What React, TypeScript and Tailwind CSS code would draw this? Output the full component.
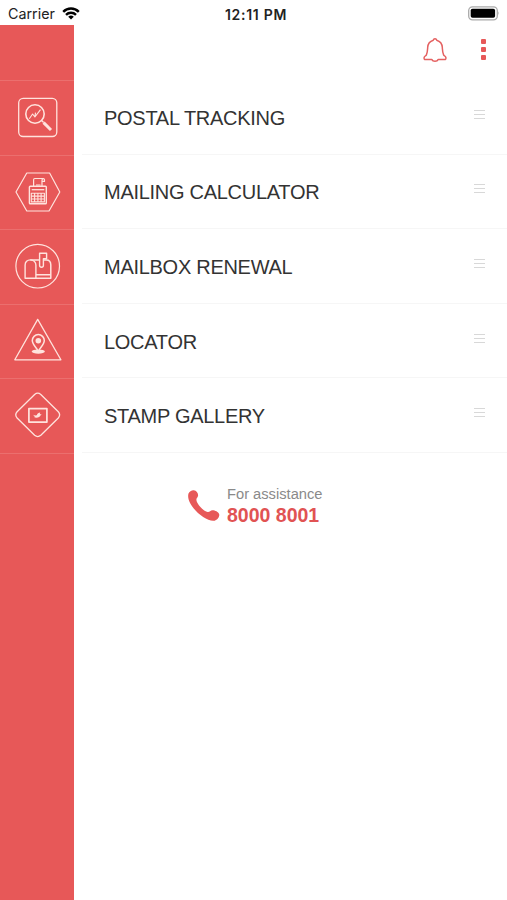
import type { ReactNode } from "react";

const TrackingIcon = () => (
  <>
    <rect x="18.7" y="18.3" width="38.1" height="38.2" rx="4.5" strokeWidth="1.3" />
    <circle cx="35" cy="34" r="9.2" strokeWidth="1.6" />
    <path d="M29.3 38.8l3.3-4.8 2.3 3 5.6-7.4M34.9 37l.6-4.3" strokeWidth="1.1" />
    <path d="M41.6 40.6l2 2" strokeWidth="1.4" />
    <path d="M43.6 42.6l7.4 7.4" strokeWidth="3" />
  </>
);

const CalculatorIcon = () => (
  <>
    <path d="M16 37l10.8-19h22.8l10.2 19-10.8 19H26.8z" />
    <rect x="29.4" y="31.2" width="16.9" height="17.6" rx="0.8" strokeWidth="1.4" />
    <path d="M33.6 31v-6.2c0-1 .4-1.3 1.2-1.3H43M42 31v-5.6c0-2.4 2.8-2.2 2.5 0v1h-2.3M36 30h4.5" />
    <path d="M31.7 34.7h12.6" strokeWidth="1.3" />
    <path d="M31.3 38.2h13.1v8.7H31.3zM31.3 41.1h13.1M31.3 44h13.1M34.6 38.2v8.7M37.9 38.2v8.7M41.1 38.2v8.7" strokeWidth="1.1" />
  </>
);

const MailboxIcon = () => (
  <>
    <circle cx="37.7" cy="37.2" r="21.8" />
    <path d="M25.1 49.2V36c0-3 2.2-5.1 5.2-5.1s5.6 2.1 5.6 5.1v13.2z" strokeWidth="1.4" />
    <path d="M30.3 30.9h8.8M43.7 30.9h2.6c2.8 0 4.5 2.1 4.5 5v13.3H35.9M36 45.8h14.8" strokeWidth="1.5" />
    <path d="M39.6 36.5V24.2h7v5.6h-3.2v6.7c0 2.3-3.8 2.3-3.8 0z" strokeWidth="1.4" />
  </>
);

const LocatorIcon = () => (
  <>
    <path d="M37.7 15.4L14.8 55.8h46.1z" strokeWidth="1.3" />
    <ellipse cx="38.3" cy="47.6" rx="6.6" ry="2.1" fill="currentColor" stroke="none" />
    <path
      d="M38.3 47.4c-1.4-3.3-6-6.7-6-10.8a6 6 0 0 1 12 0c0 4.1-4.6 7.5-6 10.8z"
      fill="#e75858"
      strokeWidth="1.5"
    />
    <circle cx="38.3" cy="36.8" r="2.8" fill="currentColor" stroke="none" />
  </>
);

const StampIcon = () => (
  <>
    <path
      d="M34.6 16.5q3.1-2.6 6.2 0L58.3 33.8q2.7 3.1 0 6.2L40.8 57.3q-3.1 2.6-6.2 0L17.1 40q-2.7-3.1 0-6.2z"
      strokeWidth="1.3"
    />
    <rect x="28.9" y="30.6" width="18" height="13.5" strokeWidth="1.7" />
    <path
      d="M33.2 36.8c1 .7 2.3.8 3.7.5.2-2 1.9-2.6 3.4-2.7-.7.6-.5 1 .1 1.6l1.4.5-1.2.5c-.7 2.4-4.8 3.4-6.8 1.5l1.3-.3c-1-.4-1.6-.9-1.9-1.6z"
      fill="currentColor"
      stroke="none"
    />
  </>
);

const menuItems: { title: string; icon: ReactNode }[] = [
  { title: "POSTAL TRACKING", icon: <TrackingIcon /> },
  { title: "MAILING CALCULATOR", icon: <CalculatorIcon /> },
  { title: "MAILBOX RENEWAL", icon: <MailboxIcon /> },
  { title: "LOCATOR", icon: <LocatorIcon /> },
  { title: "STAMP GALLERY", icon: <StampIcon /> },
];

function StatusBar() {
  return (
    <header className="grid h-[25px] shrink-0 grid-cols-3 items-center pt-[2px] pr-[7px] pl-2 font-[Inter,sans-serif] text-[#222]">
      <div className="flex items-center gap-[7px]">
        <span className="text-[14.3px]">Carrier</span>
        <svg viewBox="0 0 18 13" className="-mt-px h-[13px] w-[18px]" fill="none" stroke="#000" strokeWidth="2.4">
          <path d="M1.2 4.8a11 11 0 0 1 15.6 0M4 7.8a7.1 7.1 0 0 1 10 0" />
          <path d="M9 12.6l-2.8-2.8a4 4 0 0 1 5.6 0z" fill="#000" stroke="none" />
        </svg>
      </div>
      <span className="pt-px pl-[4px] text-center text-[14px] font-semibold tracking-[0.7px] whitespace-nowrap">
        12:11 PM
      </span>
      <svg viewBox="0 0 32 15" className="h-[15px] w-8 justify-self-end">
        <rect x="0.7" y="0.8" width="28.6" height="13" rx="3.8" fill="#fff" stroke="#aaa" strokeWidth="1.3" />
        <rect x="2.7" y="2.8" width="24.4" height="9" rx="1.8" fill="#000" />
        <path d="M30.5 5.3q1.3 2 0 4z" fill="#999" />
      </svg>
    </header>
  );
}

function Sidebar() {
  return (
    <aside className="w-[74px] shrink-0 bg-[#e75858]">
      <div className="h-[55px]" />
      <ul className="border-b border-[#eb6f6e] text-[#ffe3dd]">
        {menuItems.map((item) => (
          <li key={item.title} className="h-[74.6px] border-t border-[#eb6f6e]">
            <svg
              viewBox="0 0 74 74.6"
              className="-mt-px h-[74.6px] w-[74px]"
              fill="none"
              stroke="currentColor"
              strokeWidth="1.2"
              strokeLinejoin="round"
            >
              {item.icon}
            </svg>
          </li>
        ))}
      </ul>
    </aside>
  );
}

export default function App() {
  return (
    <div className="flex h-[900px] w-[507px] flex-col overflow-hidden bg-white font-['Liberation_Sans',Arial,sans-serif]">
      <StatusBar />
      <div className="flex flex-1">
        <Sidebar />
        <main className="flex-1">
          <div className="flex h-[55px] items-center justify-end gap-[34px] pr-[21px] pb-[6px]">
            <svg
              viewBox="0 0 24 26"
              className="h-[26px] w-6"
              fill="none"
              stroke="#e46060"
              strokeWidth="1.5"
              strokeLinejoin="round"
            >
              <path d="M10.3 3.2c.4-2 3-2 3.4 0 3.3 1 5.4 3.6 5.6 7.1.2 3.6.2 5.5 1.3 7.5.6 1.2 2.100 1.500 2.300 2.800.1.800-.1 1.600-.4 1.800H15.300c-1.200 2.600-5.400 2.600-6.600 0H1.500c-.3-.2-.5-1-.4-1.800.2-1.300 1.700-1.600 2.300-2.800 1.100-2 1.100-3.900 1.300-7.500.2-3.500 2.300-6.100 5.600-7.100z" />
            </svg>
            <div className="flex flex-col gap-[3px]">
              <span className="size-[5px] rounded-[1px] bg-[#e75858]" />
              <span className="size-[5px] rounded-[1px] bg-[#e75858]" />
              <span className="size-[5px] rounded-[1px] bg-[#e75858]" />
            </div>
          </div>
          <ul className="pl-2">
            {menuItems.map((item) => (
              <li
                key={item.title}
                className="flex h-[74.6px] items-center justify-between border-b border-[#f6f6f6] pr-[22px] pl-[22px]"
              >
                <span className="pt-[2px] text-[20px] tracking-[-0.28px] text-[#333]">{item.title}</span>
                <div className="mb-[5px] flex w-[11px] flex-col gap-[3px]">
                  <span className="h-px bg-[#d8d8d8]" />
                  <span className="h-px bg-[#d8d8d8]" />
                  <span className="h-px bg-[#d8d8d8]" />
                </div>
              </li>
            ))}
          </ul>
          <div className="mt-[32px] ml-[113px] flex items-center gap-[7px]">
            <svg viewBox="0 0 33 33" className="h-[33px] w-[33px]" fill="#e75858">
              <path d="M1.5 4.600C2.300 2.400 4.800 1 6.800 1.200c2.600.3 4.500 3 4.300 5.400-.2 2-1.900 2.500-1.700 4.400.5 4.200 7.200 11.200 11.200 12 1.800.4 2.800-1.700 4.900-1.700 2.600 0 5.900 1.700 6.600 3.700.8 2.500-1.600 6-4.400 6.700C18.500 33.800-1.800 15.300 1.500 4.600z" />
            </svg>
            <div>
              <p className="text-[14.7px] leading-[18px] text-[#8a8a8a]">For assistance</p>
              <p className="text-[19.5px] leading-[24px] font-bold text-[#e15353]">8000 8001</p>
            </div>
          </div>
        </main>
      </div>
    </div>
  );
}
